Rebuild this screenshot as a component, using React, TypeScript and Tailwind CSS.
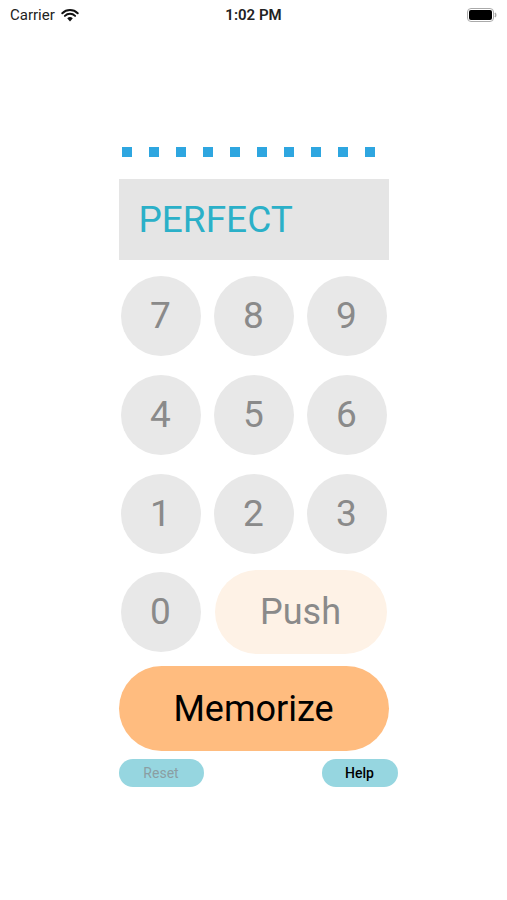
import React from 'react';

const font = { fontFamily: 'Roboto, "Liberation Sans", sans-serif' };

function StatusBar() {
  return (
    <div className="flex h-[30px] items-center justify-between px-[10px] text-[15px] text-[#222]">
      <div className="flex w-[120px] items-center gap-[6px]">
        <span>Carrier</span>
        <svg width="18" height="13" viewBox="0 0 18 13">
          <path d="M9 12.5 L6.2 9.3 A4 4 0 0 1 11.8 9.3 Z" fill="#111" />
          <path d="M3.9 6.9 A7.3 7.3 0 0 1 14.1 6.9" stroke="#111" strokeWidth="2" fill="none" strokeLinecap="round" />
          <path d="M1.3 4.2 A11 11 0 0 1 16.7 4.2" stroke="#111" strokeWidth="2" fill="none" strokeLinecap="round" />
        </svg>
      </div>
      <span className="font-semibold">1:02 PM</span>
      <div className="flex w-[120px] justify-end">
        <svg width="30" height="14" viewBox="0 0 30 14">
          <rect x="0.5" y="0.5" width="26" height="13" rx="3.5" fill="none" stroke="#aaa" />
          <rect x="2" y="2" width="23" height="10" rx="2" fill="#000" />
          <path d="M28 5 Q29.5 7 28 9" stroke="#aaa" strokeWidth="1.5" fill="none" />
        </svg>
      </div>
    </div>
  );
}

function Key({ n }: { n: string }) {
  return (
    <div className="flex h-[80px] w-[80px] items-center justify-center rounded-full bg-[#e8e8e8] text-[37px] text-[#8a8a8a]">
      {n}
    </div>
  );
}

export default function App() {
  const rows = [['7', '8', '9'], ['4', '5', '6'], ['1', '2', '3']];
  return (
    <div className="min-h-[900px] w-full bg-white" style={font}>
      <StatusBar />
      <div className="mx-auto w-[270px] pt-[117px]">
        {/* Progress dots */}
        <div className="flex justify-between pl-[3px] pr-[13px]">
          {Array.from({ length: 10 }).map((_, i) => (
            <div key={i} className="h-[10px] w-[10px] bg-[#2ea6e0]" />
          ))}
        </div>

        {/* Display */}
        <div className="mt-[22px] flex h-[81px] items-center bg-[#e5e5e5] pl-[20px] text-[37px] text-[#2bb0c8]">
          PERFECT
        </div>

        {/* Keypad */}
        <div className="mt-[16px] flex flex-col gap-[19px] px-[2px]">
          {rows.map((r, i) => (
            <div key={i} className="flex justify-between">
              {r.map((n) => (
                <Key key={n} n={n} />
              ))}
            </div>
          ))}
        </div>
        <div className="mt-[16px] flex items-center gap-[14px] px-[2px]">
          <Key n="0" />
          <div className="flex h-[84px] flex-1 items-center justify-center rounded-full bg-[#fef2e6] text-[36px] text-[#8a8a8a]">
            Push
          </div>
        </div>

        <div className="mt-[12px] flex h-[85px] items-center justify-center rounded-full bg-[#ffbc7f] text-[36px] text-black">
          Memorize
        </div>

        <div className="mt-[8px] flex justify-between">
          <div className="flex h-[28px] w-[85px] items-center justify-center rounded-full bg-[#96d6e0] text-[14px] text-[#8b9ea3]">
            Reset
          </div>
          <div className="-mr-[9px] flex h-[28px] w-[76px] items-center justify-center rounded-full bg-[#96d6e0] text-[14px] font-medium text-black">
            Help
          </div>
        </div>
      </div>
    </div>
  );
}
